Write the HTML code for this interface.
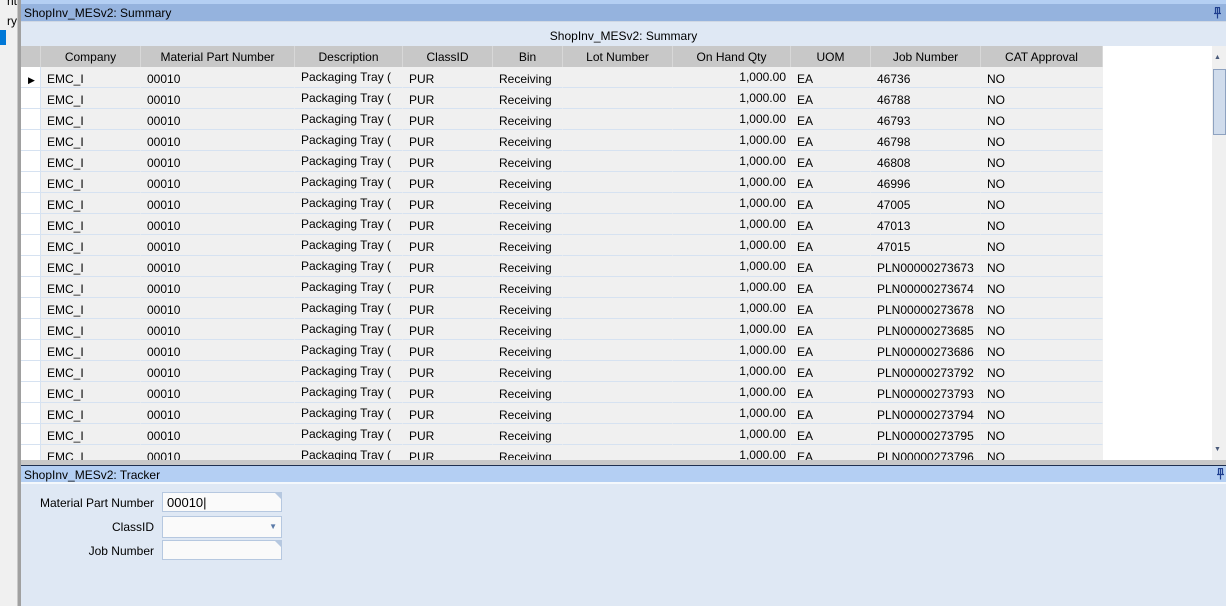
<!DOCTYPE html><html><head><style>
body{margin:0;width:1226px;height:606px;overflow:hidden;background:#dfe8f4;font-family:"Liberation Sans",sans-serif;font-size:12px;color:#000;position:relative}
.a{position:absolute}
.row{position:absolute;left:0;height:21px;width:1083px}
.c{position:absolute;top:0;height:20px;line-height:24px;border-bottom:1px solid #d6e2f1;border-right:1px solid #f0f0f0;background:#f0f0f0;white-space:nowrap;overflow:hidden;padding-left:6px;box-sizing:content-box}
.h{position:absolute;top:0;height:21px;line-height:23px;background:#c8c8c8;border-right:1px solid #d8d8d8;text-align:center;box-sizing:border-box}
.inp{position:absolute;left:162px;width:118px;height:18px;background:#fafafa;border:1px solid #b6c8e0}
.pin{position:absolute;right:4px;width:9px;height:12px}
</style></head><body>
<div class="a" style="left:0;top:0;width:17px;height:606px;background:#f0f0f0"></div>
<div class="a" style="left:0;top:-6px;width:17px;text-align:right;overflow:hidden">nt</div>
<div class="a" style="left:0;top:14px;width:17px;text-align:right;overflow:hidden">ry</div>
<div class="a" style="left:0;top:30px;width:6px;height:15px;background:#0078d7"></div>
<div class="a" style="left:17px;top:0;width:4px;height:606px;background:#a0a0a0;border-left:1px solid #c8c8c8;box-sizing:border-box"></div>
<div class="a" style="left:21px;top:0;width:1205px;height:4px;background:#b4cff3"></div>
<div class="a" style="left:21px;top:4px;width:1205px;height:18px;background:#95b3de;border-bottom:1px solid #d0d8e4;box-sizing:border-box;line-height:19px;padding-left:3px">ShopInv_MESv2: Summary
<svg class="pin" style="top:3px" viewBox="0 0 9 12"><path d="M2 0.5h5M2.5 0.5v6M6.5 0.5v6M1 6.5h7M4.5 6.5v5M4.5 1v5" stroke="#1f3f8f" stroke-width="1.2" fill="none"/></svg></div>
<div class="a" style="left:21px;top:22px;width:1205px;height:24px;line-height:28px;text-align:center">ShopInv_MESv2: Summary</div>
<div class="a" id="g" style="left:21px;top:46px;width:1191px;height:414px;background:#fff;overflow:hidden"></div>
<div class="a" style="left:1212px;top:46px;width:14px;height:414px;background:#f0f0f0">
<div class="a" style="left:2px;top:8px;color:#4a5a7a;font-size:7px">▲</div>
<div class="a" style="left:1px;top:23px;width:11px;height:64px;background:#d0dcec;border:1px solid #8ea2c0"></div>
<div class="a" style="left:2px;top:400px;color:#4a5a7a;font-size:7px">▼</div></div>
<div class="a" style="left:21px;top:460px;width:1205px;height:6px;background:#c8c8c8;border-bottom:1px solid #1f3050;box-sizing:border-box"></div>
<div class="a" style="left:21px;top:466px;width:1205px;height:16px;background:#b4cff3;line-height:18px;padding-left:3px">ShopInv_MESv2: Tracker
<svg class="pin" style="top:2px" viewBox="0 0 9 12"><path d="M2 0.5h5M2.5 0.5v6M6.5 0.5v6M1 6.5h7M4.5 6.5v5M4.5 1v5" stroke="#1f3f8f" stroke-width="1.2" fill="none"/></svg></div>
<div class="a" style="left:21px;top:482px;width:1205px;height:2px;background:#f4f8fc"></div>
<div class="a" style="left:0;top:496px;width:154px;text-align:right">Material Part Number</div>
<div class="a" style="left:0;top:520px;width:154px;text-align:right">ClassID</div>
<div class="a" style="left:0;top:544px;width:154px;text-align:right">Job Number</div>
<div class="inp" style="top:492px;font-size:13px;line-height:20px;padding-left:4px;width:114px">00010|<span style="position:absolute;right:0;top:0;border-top:6px solid #b6c8e0;border-left:6px solid transparent"></span></div>
<div class="inp" style="top:516px;height:20px"><span style="position:absolute;right:4px;top:5px;color:#5a7aa8;font-size:8px">▼</span></div>
<div class="inp" style="top:540px"><span style="position:absolute;right:0;top:0;border-top:6px solid #b6c8e0;border-left:6px solid transparent"></span></div>
<script>
var w=[20,100,154,108,90,70,110,118,80,110,122],x=[0];w.forEach(function(v,i){x.push(x[i]+v)});
var hd=["","Company","Material Part Number","Description","ClassID","Bin","Lot Number","On Hand Qty","UOM","Job Number","CAT Approval"];
var j=["46736","46788","46793","46798","46808","46996","47005","47013","47015","PLN00000273673","PLN00000273674","PLN00000273678","PLN00000273685","PLN00000273686","PLN00000273792","PLN00000273793","PLN00000273794","PLN00000273795","PLN00000273796"],h='<div class="row" style="top:0">';
hd.forEach(function(t,i){h+='<div class="h" style="left:'+x[i]+'px;width:'+w[i]+'px">'+t+'</div>'});h+='</div>';
j.forEach(function(jn,r){var v=["","EMC_I","00010","Packaging Tray (","PUR","Receiving","","1,000.00","EA",jn,"NO"];
h+='<div class="row" style="top:'+(21+r*21)+'px">';
v.forEach(function(t,i){var st='left:'+x[i]+'px;width:'+(w[i]-7)+'px;';
if(i==0)st='left:0;width:19px;padding:0;background:#fff;border-right:1px solid #d6e2f1;';
if(i==3)st+='line-height:20px;';
if(i==7)st+='text-align:right;padding:0 4px 0 0;width:'+(w[i]-5)+'px;line-height:20px;';
if(i==0&&r==0)t='<span style="font-size:9px;padding-left:7px;line-height:22px">&#9654;</span>';
h+='<div class="c" style="'+st+'">'+t+'</div>'});h+='</div>'});
document.getElementById("g").innerHTML=h;
</script>
</body></html>
